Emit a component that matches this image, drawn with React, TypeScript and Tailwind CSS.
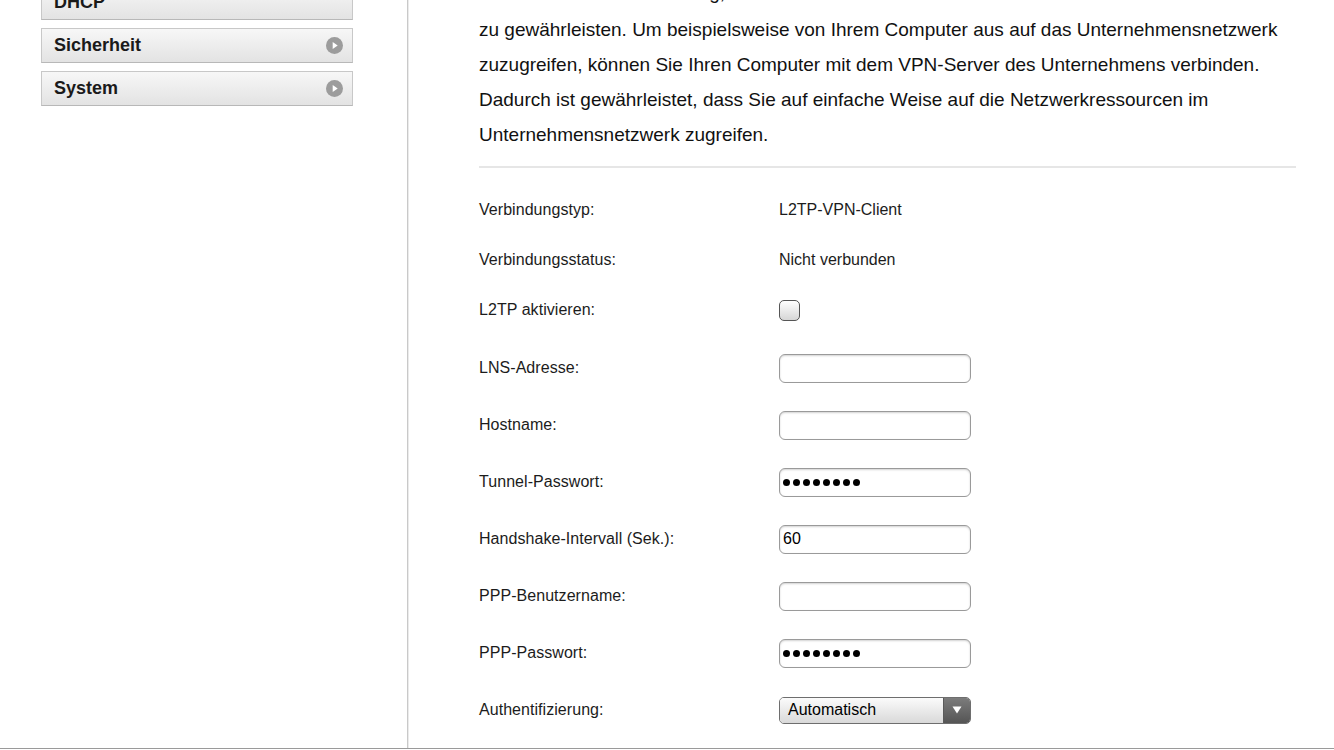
import React from "react";

const font = { fontFamily: '"Liberation Sans", Arial, sans-serif' };

function Arrow() {
  return (
    <svg width="17" height="17" viewBox="0 0 16 16" className="shrink-0">
      <circle cx="8" cy="8" r="8" fill="#9c9c9c" />
      <path d="M6.3 4.6 L11 8 L6.3 11.4 Z" fill="#ffffff" />
    </svg>
  );
}

function NavButton({ label, arrow = true }: { label: string; arrow?: boolean }) {
  return (
    <div className="flex h-[35px] w-[312px] items-center justify-between border border-[#c8c8c8] border-b-[#b8b8b8] bg-gradient-to-b from-[#f7f7f7] to-[#e3e3e3] pl-[12px] pr-[9px]">
      <span className="text-[18px] font-bold text-[#1a1a1a]">{label}</span>
      {arrow && <Arrow />}
    </div>
  );
}

function TextInput({ value }: { value?: string }) {
  return (
    <div className="flex h-[29px] w-[192px] items-center rounded-[6px] border border-[#9a9a9a] bg-white pl-[3px] text-[16px] text-black shadow-[inset_0_1px_2px_rgba(0,0,0,0.18)]">
      {value}
    </div>
  );
}

function PasswordInput() {
  return (
    <div className="flex h-[29px] w-[192px] items-center gap-[3px] rounded-[6px] border border-[#9a9a9a] bg-white pl-[3px] shadow-[inset_0_1px_2px_rgba(0,0,0,0.18)]">
      {Array.from({ length: 8 }).map((_, i) => (
        <div key={i} className="h-[7px] w-[7px] rounded-full bg-black" />
      ))}
    </div>
  );
}

function Row({ label, children, h }: { label: string; children: React.ReactNode; h: string }) {
  return (
    <div className={`flex items-center ${h}`}>
      <div className="w-[300px] shrink-0 text-[16px] tracking-[0.05px] text-[#1c1c1c]">{label}</div>
      <div className="flex items-center text-[16px] text-[#1c1c1c]">{children}</div>
    </div>
  );
}

export default function App() {
  return (
    <div className="flex h-[750px] w-[1334px] flex-col overflow-hidden bg-white" style={font}>
      <div className="flex h-[748px] shrink-0">
        <div className="w-[407px] shrink-0 pl-[41px]">
          <div className="-mt-[15px] flex flex-col gap-2">
            <NavButton label="DHCP" arrow={false} />
            <NavButton label="Sicherheit" />
            <NavButton label="System" />
          </div>
        </div>
        <div className="w-px shrink-0 bg-[#c9c9c9]" />
        <div className="w-px shrink-0 bg-[#ebebeb]" />
        <div className="flex-1 pl-[70px] pr-[38px]">
          <div className="-mt-[26px] whitespace-nowrap text-[19px] leading-[35px] text-[#111]">
            <div className="leading-[38px]">Er dient zur Verschlüsselung, um die Sicherheit</div>
            <div>zu gewährleisten. Um beispielsweise von Ihrem Computer aus auf das Unternehmensnetzwerk</div>
            <div>zuzugreifen, können Sie Ihren Computer mit dem VPN-Server des Unternehmens verbinden.</div>
            <div>Dadurch ist gewährleistet, dass Sie auf einfache Weise auf die Netzwerkressourcen im</div>
            <div>Unternehmensnetzwerk zugreifen.</div>
          </div>
          <div className="mt-[14px] h-[2px] bg-[#e6e6e6]" />
          <div className="mt-[17px] flex flex-col">
            <Row label="Verbindungstyp:" h="h-[50px]">L2TP-VPN-Client</Row>
            <Row label="Verbindungsstatus:" h="h-[50px]">Nicht verbunden</Row>
            <Row label="L2TP aktivieren:" h="h-[50px]">
              <div className="h-[21px] w-[21px] rounded-[5px] border border-[#555] bg-gradient-to-b from-white to-[#d6d6d6]" />
            </Row>
            <div className="mt-[4.5px] flex flex-col">
              <Row label="LNS-Adresse:" h="h-[57px]"><TextInput /></Row>
              <Row label="Hostname:" h="h-[57px]"><TextInput /></Row>
              <Row label="Tunnel-Passwort:" h="h-[57px]"><PasswordInput /></Row>
              <Row label="Handshake-Intervall (Sek.):" h="h-[57px]"><TextInput value="60" /></Row>
              <Row label="PPP-Benutzername:" h="h-[57px]"><TextInput /></Row>
              <Row label="PPP-Passwort:" h="h-[57px]"><PasswordInput /></Row>
              <Row label="Authentifizierung:" h="h-[57px]">
                <div className="flex h-[27px] w-[192px] overflow-hidden rounded-[5px] border border-[#6e6e6e]">
                  <div className="flex flex-1 items-center bg-gradient-to-b from-[#fbfbfb] to-[#d9d9d9] pl-[8px] text-[16px] text-black">
                    Automatisch
                  </div>
                  <div className="flex w-[27px] items-center justify-center border-l border-[#5a5a5a] bg-gradient-to-b from-[#7c7c7c] to-[#555]">
                    <svg width="10" height="8" viewBox="0 0 10 8">
                      <path d="M0.5 0.5 L9.5 0.5 L5 7.5 Z" fill="#fff" />
                    </svg>
                  </div>
                </div>
              </Row>
            </div>
          </div>
        </div>
      </div>
      <div className="h-px shrink-0 bg-[#9a9a9a]" />
    </div>
  );
}
